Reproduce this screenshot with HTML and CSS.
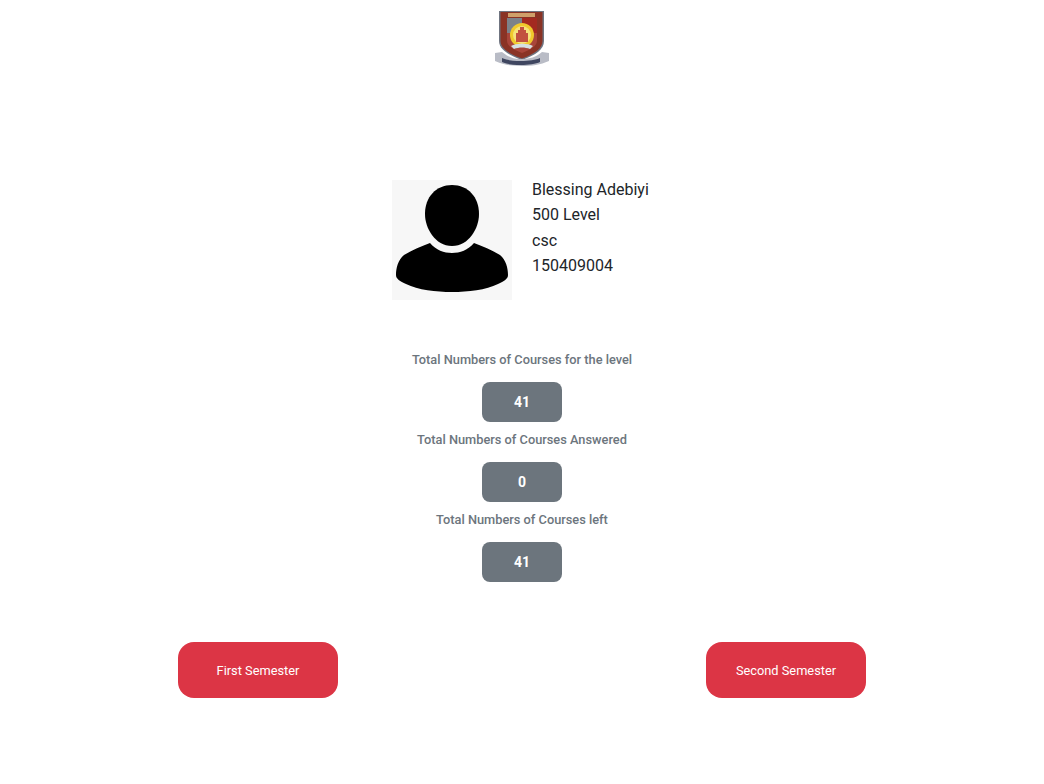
FILE: index.html
```html
<!DOCTYPE html>
<html>
<head>
  <title>Student Dashboard</title>
  <link rel="stylesheet" href="styles.css">
</head>
<body>
  <header class="logo-bar">
    <svg class="logo" width="56" height="56" viewBox="0 0 56 56">
      <path d="M5 0H50V30C50 38 42 44 28 49C14 44 5 38 5 30Z" fill="#6f7480"/>
      <path d="M6.5 1H48.5V30C48.5 37 41 43 28 47.5C15 43 6.5 37 6.5 30Z" fill="#8a3325"/>
      <rect x="14" y="2" width="27" height="4" fill="#cfa06a"/>
      <path d="M13 7H28V22H13Z" fill="#7c828a"/>
      <path d="M28 7H43V22H28Z" fill="#a32a20"/>
      <path d="M13 22H43V30C43 35 36 39 28 42C20 39 13 35 13 30Z" fill="#a8453a"/>
      <circle cx="28" cy="24" r="12" fill="#f0c92c"/>
      <circle cx="28" cy="24" r="9" fill="#f6e27a"/>
      <path d="M22 31V22H24V19H26V16H30V19H32V22H34V31Z" fill="#c2513f"/>
      <path d="M17 35C22 32 34 32 39 35L36 38C31 36 25 36 20 38Z" fill="#d5e0e2"/>
      <path d="M1 42L8 41C14 46 20 48 28 48C36 48 42 46 48 41L55 42V50C46 54 38 55 28 55C18 55 10 54 1 50Z" fill="#b9bcc6"/>
      <path d="M8 47C16 51 38 51 46 47V51C38 55 16 55 8 51Z" fill="#3f4660"/>
    </svg>
  </header>

  <main>
    <section class="profile">
      <div class="avatar">
        <svg width="120" height="120" viewBox="0 0 120 120">
          <path d="M60 5C44 5 33 17 33 34C33 48 43 66 60 66C77 66 87 48 87 34C87 17 76 5 60 5Z" fill="#000"/>
          <path d="M38 63C44 70 52 73 60 73C68 73 76 70 82 63C90 66 100 70 108 75C114 80 116 88 116 95C116 99 112 101 106 104C94 110 76 112 60 112C44 112 26 110 14 104C8 101 4 99 4 95C4 88 6 80 12 75C20 70 30 66 38 63Z" fill="#000"/>
        </svg>
      </div>
      <div class="profile-info">
        <p>Blessing Adebiyi</p>
        <p>500 Level</p>
        <p>csc</p>
        <p>150409004</p>
      </div>
    </section>

    <section class="stats">
      <p class="stat-label">Total Numbers of Courses for the level</p>
      <div class="stat-badge">41</div>
      <p class="stat-label">Total Numbers of Courses Answered</p>
      <div class="stat-badge">0</div>
      <p class="stat-label">Total Numbers of Courses left</p>
      <div class="stat-badge">41</div>
    </section>

    <section class="semesters">
      <a class="semester-btn" href="#">First Semester</a>
      <a class="semester-btn" href="#">Second Semester</a>
    </section>
  </main>
</body>
</html>
```

FILE: styles.css
```css
* {
  box-sizing: border-box;
  margin: 0;
  padding: 0;
}
body {
  font-family: Roboto, Arial, sans-serif;
  color: #212529;
  background-color: #fff;
}
.logo-bar {
  display: flex;
  justify-content: center;
  padding-top: 11px;
}
.logo {
  display: block;
  filter: blur(0.5px);
}
.profile {
  display: flex;
  justify-content: center;
  gap: 20px;
  margin-top: 113px;
}
.avatar {
  width: 120px;
  height: 120px;
  background-color: #f7f7f7;
}
.avatar svg {
  display: block;
}
.profile-info {
  width: 120px;
  margin-top: -3.2px;
  font-size: 16px;
  line-height: 25.5px;
  white-space: nowrap;
}
.stats {
  display: flex;
  flex-direction: column;
  align-items: center;
  margin-top: 42px;
}
.stat-label {
  height: 40px;
  line-height: 36px;
  font-size: 12.8px;
  font-weight: 500;
  color: #6c757d;
}
.stat-badge {
  width: 80px;
  height: 40px;
  line-height: 40px;
  text-align: center;
  font-size: 14px;
  font-weight: 700;
  color: #fff;
  background-color: #6c757d;
  border-radius: 8px;
}
.semesters {
  display: flex;
  justify-content: space-between;
  width: 688px;
  margin: 60px auto 0;
}
.semester-btn {
  width: 160px;
  height: 56px;
  line-height: 57px;
  text-align: center;
  font-size: 12.8px;
  color: #fff;
  text-decoration: none;
  background-color: #dc3545;
  border-radius: 16px;
}
```
